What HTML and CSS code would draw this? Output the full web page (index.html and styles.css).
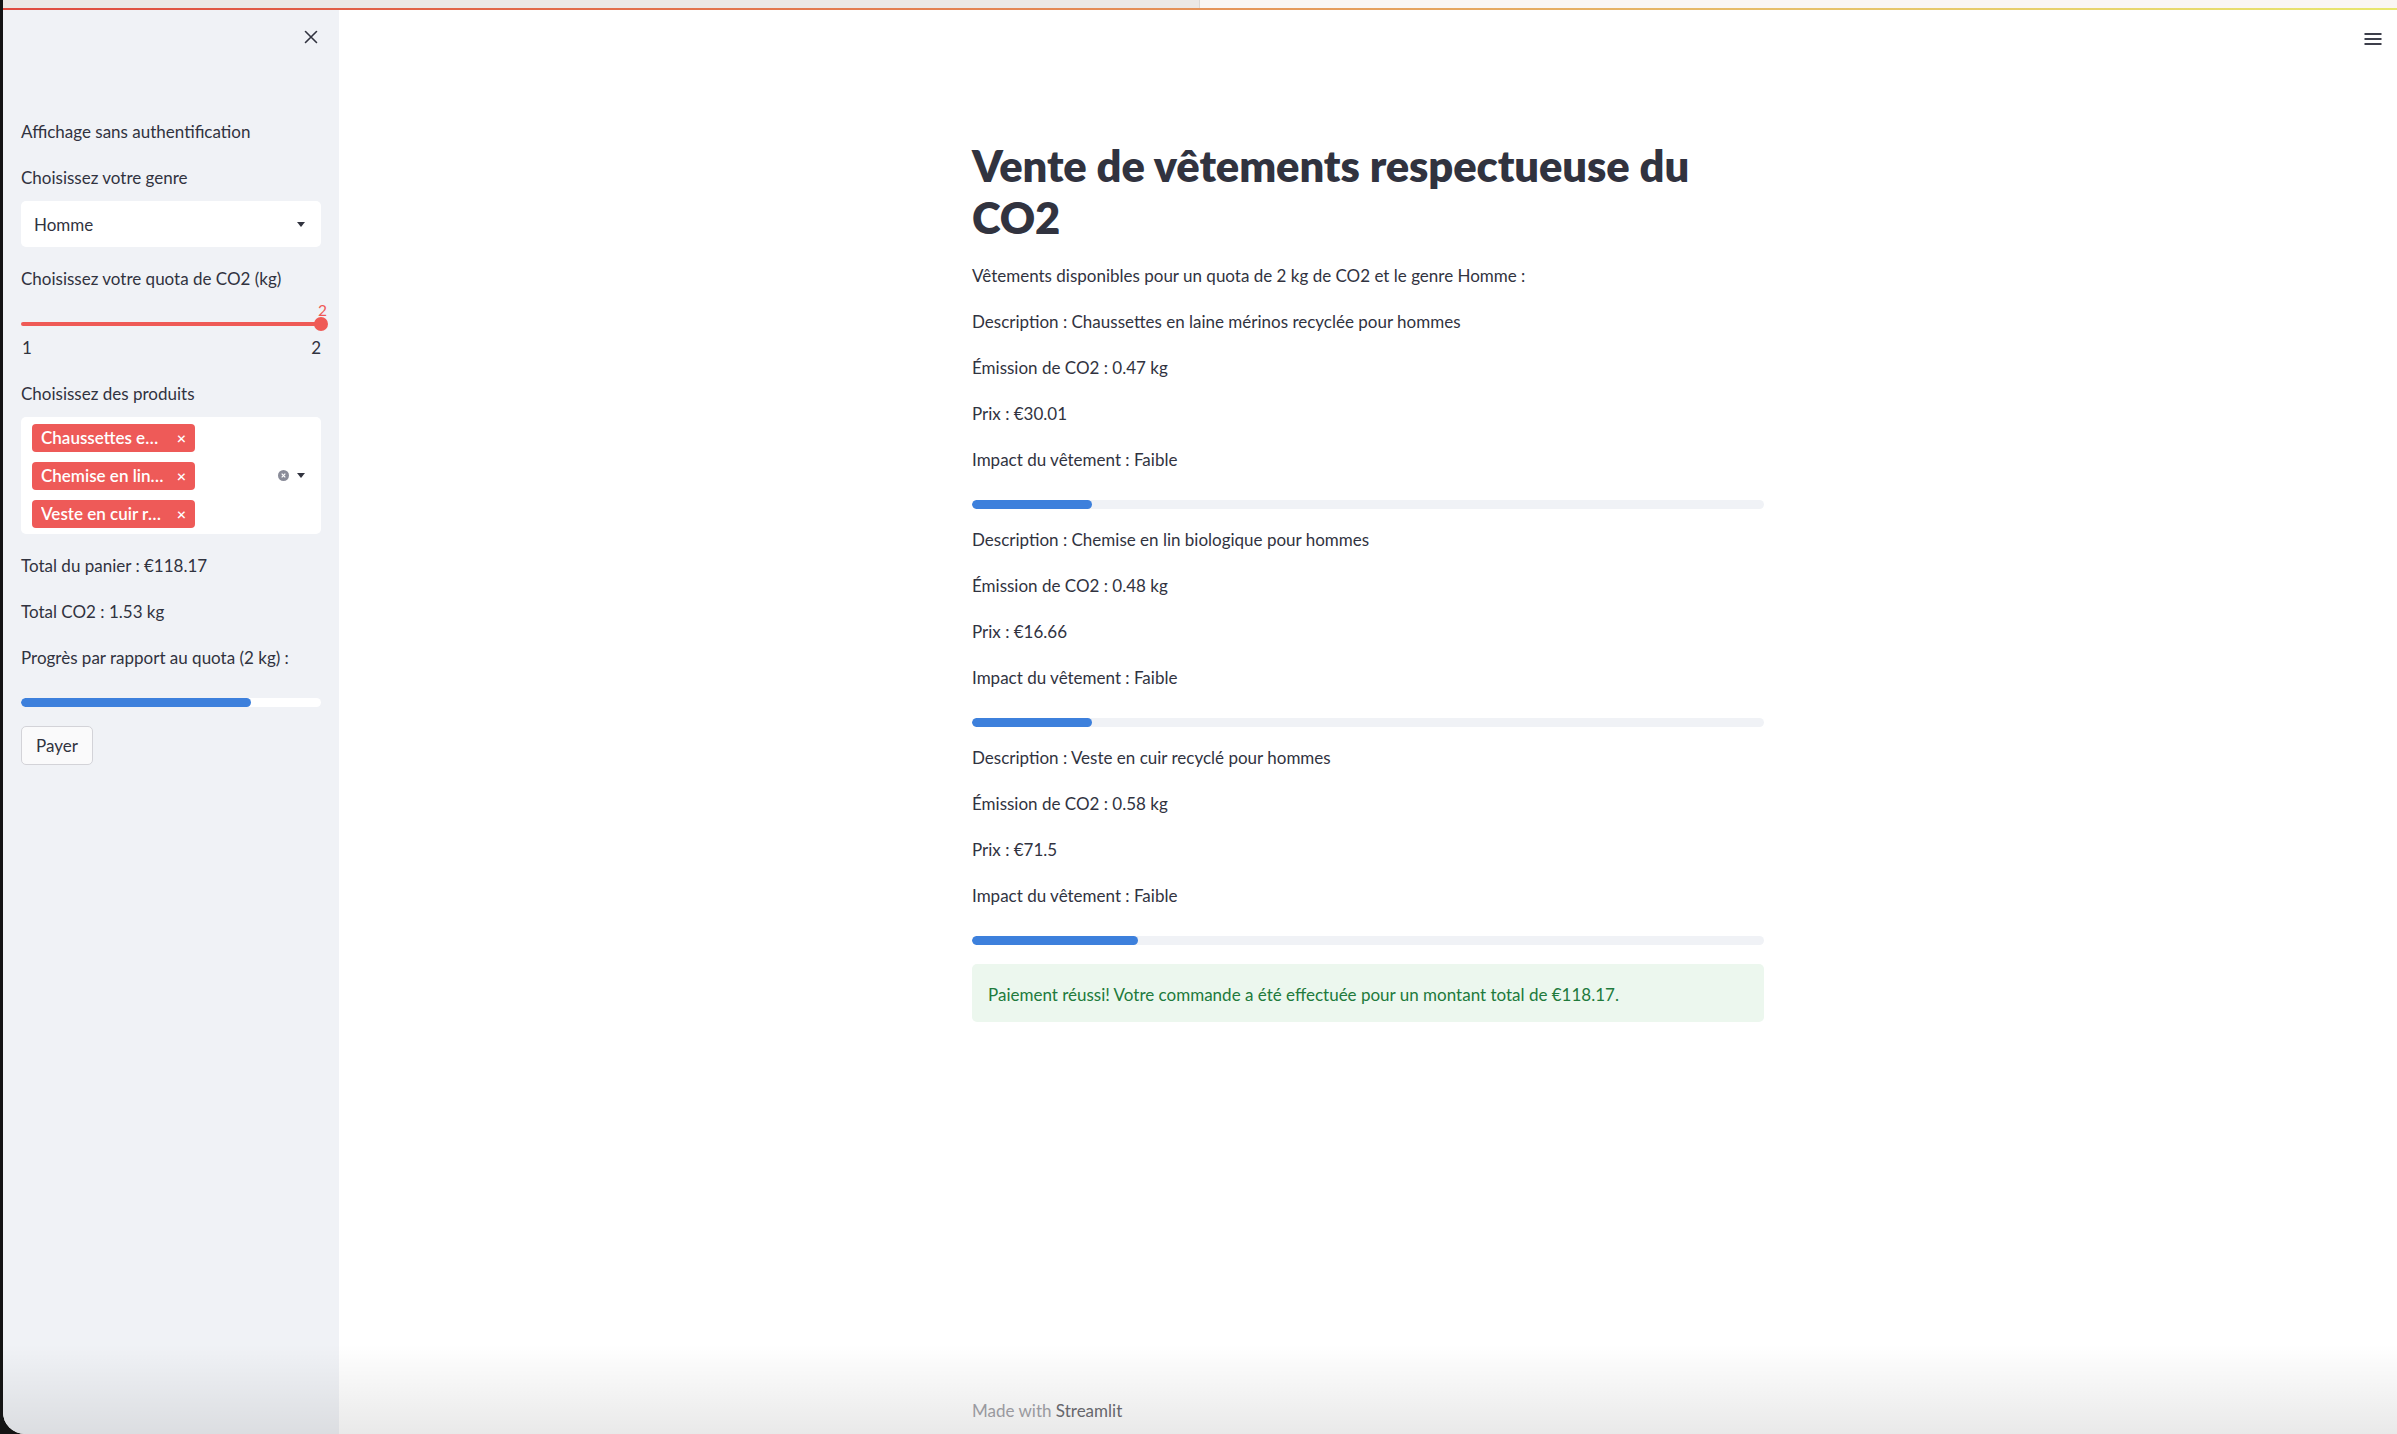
FILE: index.html
```html
<!DOCTYPE html>
<html lang="fr">
<head>
<meta charset="utf-8">
<title>Vente de vêtements respectueuse du CO2</title>
<link rel="stylesheet" href="styles.css">
</head>
<body>
<div class="window">
  <div class="chrome">
    <div class="chrome-left"></div>
    <div class="chrome-right"></div>
  </div>
  <div class="decoration"></div>
  <div class="app">
    <aside class="sidebar">
      <div class="sidebar-head">
        <svg class="close-icon" width="14" height="14" viewBox="0 0 14 14"><path d="M1.5 1.5 L12.5 12.5 M12.5 1.5 L1.5 12.5" stroke="#31333f" stroke-width="1.6" fill="none" stroke-linecap="round"/></svg>
      </div>
      <div class="sidebar-body">
        <p class="text">Affichage sans authentification</p>
        <div class="widget">
          <p class="label">Choisissez votre genre</p>
          <div class="select">
            <span>Homme</span>
            <span class="caret"></span>
          </div>
        </div>
        <div class="widget slider-widget">
          <p class="label">Choisissez votre quota de CO2 (kg)</p>
          <div class="slider">
            <div class="slider-value">2</div>
            <div class="slider-track"><span class="thumb"></span></div>
            <div class="slider-ticks"><span>1</span><span>2</span></div>
          </div>
        </div>
        <div class="widget">
          <p class="label">Choisissez des produits</p>
          <div class="multiselect">
            <div class="tags">
              <div class="tag"><span class="tag-text">Chaussettes en laine mérinos recyclée pour hommes</span><span class="tag-x">×</span></div>
              <div class="tag"><span class="tag-text">Chemise en lin biologique pour hommes</span><span class="tag-x">×</span></div>
              <div class="tag"><span class="tag-text">Veste en cuir recyclé pour hommes</span><span class="tag-x">×</span></div>
            </div>
            <div class="ms-icons">
              <span class="clear-icon"><svg width="11" height="11" viewBox="0 0 11 11"><circle cx="5.5" cy="5.5" r="5.5" fill="#8a8c99"/><path d="M3.7 3.7 L7.3 7.3 M7.3 3.7 L3.7 7.3" stroke="#fff" stroke-width="1.2"/></svg></span>
              <span class="caret"></span>
            </div>
          </div>
        </div>
        <p class="text">Total du panier : €118.17</p>
        <p class="text">Total CO2 : 1.53 kg</p>
        <p class="text">Progrès par rapport au quota (2 kg) :</p>
        <div class="progress side-progress"><div class="fill" style="width:76.5%"></div></div>
        <button class="btn">Payer</button>
      </div>
    </aside>
    <main class="main">
      <svg class="menu-icon" width="18" height="14" viewBox="0 0 18 14"><path d="M0.5 2 H17.5 M0.5 7 H17.5 M0.5 12 H17.5" stroke="#3d3f4b" stroke-width="1.8"/></svg>
      <div class="block">
        <h1 class="title">Vente de vêtements respectueuse du CO2</h1>
        <p class="text">Vêtements disponibles pour un quota de 2 kg de CO2 et le genre Homme :</p>
        <div class="product">
          <p class="text">Description : Chaussettes en laine mérinos recyclée pour hommes</p>
          <p class="text">Émission de CO2 : 0.47 kg</p>
          <p class="text">Prix : €30.01</p>
          <p class="text">Impact du vêtement : Faible</p>
          <div class="progress main-progress"><div class="fill" style="width:15.2%"></div></div>
        </div>
        <div class="product">
          <p class="text">Description : Chemise en lin biologique pour hommes</p>
          <p class="text">Émission de CO2 : 0.48 kg</p>
          <p class="text">Prix : €16.66</p>
          <p class="text">Impact du vêtement : Faible</p>
          <div class="progress main-progress"><div class="fill" style="width:15.2%"></div></div>
        </div>
        <div class="product">
          <p class="text">Description : Veste en cuir recyclé pour hommes</p>
          <p class="text">Émission de CO2 : 0.58 kg</p>
          <p class="text">Prix : €71.5</p>
          <p class="text">Impact du vêtement : Faible</p>
          <div class="progress main-progress"><div class="fill" style="width:21%"></div></div>
        </div>
        <div class="success">Paiement réussi! Votre commande a été effectuée pour un montant total de €118.17.</div>
      </div>
      <footer class="footer">
        <span class="made">Made with</span> <span class="brand">Streamlit</span>
      </footer>
    </main>
  </div>
</div>
</body>
</html>
```
FILE: styles.css
```css
* { box-sizing: border-box; }
html, body {
  margin: 0;
  padding: 0;
}
body {
  width: 2397px;
  height: 1434px;
  overflow: hidden;
  background: #141414;
  font-family: "Lato", "Noto Sans", sans-serif;
  color: #31333f;
}
.window {
  position: relative;
  margin-left: 3px;
  height: 1434px;
  display: flex;
  flex-direction: column;
  background: #ffffff;
  border-bottom-left-radius: 22px;
  overflow: hidden;
}
.window::after {
  content: "";
  position: absolute;
  left: 0;
  right: 0;
  bottom: 0;
  height: 90px;
  background: linear-gradient(to bottom, rgba(0,0,0,0), rgba(0,0,0,0.085));
  pointer-events: none;
}
.chrome {
  display: flex;
  height: 8px;
  flex-shrink: 0;
}
.chrome-left {
  width: 1197px;
  background: #ece8e5;
  border-right: 1px solid #dcd8d5;
}
.chrome-right {
  flex: 1;
  background: #faf6f3;
}
.decoration {
  height: 2px;
  flex-shrink: 0;
  background: linear-gradient(90deg, #df4a3e 0%, #e48a55 45%, #e6c06a 75%, #e8e76e 100%);
}
.app {
  flex: 1;
  display: flex;
  min-height: 0;
}
.sidebar {
  width: 336px;
  flex-shrink: 0;
  background: #f0f2f6;
  display: flex;
  flex-direction: column;
}
.sidebar-head {
  height: 54px;
  display: flex;
  align-items: center;
  justify-content: flex-end;
  padding-right: 21px;
}
.close-icon { display: block; }
.sidebar-body {
  padding: 56px 18px 0 18px;
  display: flex;
  flex-direction: column;
}
p { margin: 0; }
.text, .label {
  font-size: 17px;
  line-height: 24px;
  height: 24px;
  white-space: nowrap;
}
.sidebar-body > .text { margin-bottom: 22px; }
.widget { margin-bottom: 20px; }
.widget .label { margin-bottom: 11px; }
.select {
  height: 46px;
  background: #ffffff;
  border-radius: 5px;
  display: flex;
  align-items: center;
  justify-content: space-between;
  padding: 0 16px 0 13px;
  font-size: 17px;
}
.caret {
  width: 0;
  height: 0;
  border-left: 4.5px solid transparent;
  border-right: 4.5px solid transparent;
  border-top: 5px solid #31333f;
}
.slider-widget { margin-bottom: 22px; }
.slider-widget .label { margin-bottom: 0; }
.slider {
  display: flex;
  flex-direction: column;
}
.slider-value {
  align-self: flex-end;
  color: #ef5a56;
  font-size: 15.5px;
  line-height: 18px;
  margin-right: -6px;
  margin-top: 10px;
}
.slider-track {
  position: relative;
  height: 4px;
  background: #ef5a56;
  border-radius: 2px;
  margin-top: 3px;
}
.thumb {
  position: absolute;
  right: -7px;
  top: -5px;
  width: 14px;
  height: 14px;
  border-radius: 50%;
  background: #ef5a56;
}
.slider-ticks {
  display: flex;
  justify-content: space-between;
  font-size: 17px;
  line-height: 24px;
  margin-top: 10px;
  padding: 0 0 0 1px;
}
.multiselect {
  background: #ffffff;
  border-radius: 5px;
  display: flex;
  align-items: center;
  padding: 6px 16px 6px 11px;
  height: 117px;
}
.tags {
  display: flex;
  flex-direction: column;
  gap: 10px;
  flex: 1;
}
.tag {
  width: 163px;
  height: 28px;
  border-radius: 4px;
  background: #ee5a58;
  color: #ffffff;
  display: flex;
  align-items: center;
  padding: 0 9px 0 9px;
  font-size: 17px;
  font-weight: 600;
}
.tag-text {
  width: 124px;
  overflow: hidden;
  white-space: nowrap;
  text-overflow: ellipsis;
}
.tag-x {
  margin-left: auto;
  font-size: 16px;
  line-height: 1;
}
.ms-icons {
  display: flex;
  align-items: center;
  gap: 8px;
}
.clear-icon { display: flex; }
.progress {
  height: 9px;
  border-radius: 5px;
  overflow: hidden;
}
.progress .fill {
  height: 100%;
  background: #3d80dc;
  border-radius: 5px;
}
.side-progress {
  background: #ffffff;
  margin-top: 6px;
}
.btn {
  margin-top: 19px;
  align-self: flex-start;
  width: 72px;
  height: 39px;
  border: 1.5px solid #d3d3d8;
  border-radius: 5px;
  background: #fafafb;
  font-family: inherit;
  font-size: 17px;
  color: #31333f;
  padding: 0;
}
.main {
  position: relative;
  flex: 1;
  display: flex;
  flex-direction: column;
  align-items: center;
}
.menu-icon {
  position: absolute;
  top: 22px;
  right: 15px;
}
.block {
  width: 792px;
  padding-top: 129px;
  display: flex;
  flex-direction: column;
}
.title {
  margin: 0 0 21px 0;
  font-size: 43.5px;
  font-weight: 800;
  line-height: 52px;
  color: #31333f;
  letter-spacing: -0.1px;
}
.block > .text { margin-bottom: 22px; }
.product {
  display: flex;
  flex-direction: column;
}
.product .text { margin-bottom: 22px; }
.product .text:nth-child(4) { margin-bottom: 0; }
.main-progress {
  background: #f0f2f6;
  margin-top: 28px;
  margin-bottom: 19px;
}
.product:last-of-type .main-progress {
  margin-top: 27px;
  margin-bottom: 17px;
}
.success {
  margin-top: 0;
  height: 58px;
  background: #ecf7ee;
  border-radius: 5px;
  color: #217a3c;
  font-size: 17px;
  line-height: 24px;
  padding: 19px 16px 15px 16px;
}
.footer {
  margin-top: auto;
  width: 792px;
  padding-bottom: 11px;
  font-size: 17px;
  line-height: 24px;
}
.made { color: #a4a4aa; }
.brand { color: #6d6d73; }
```
